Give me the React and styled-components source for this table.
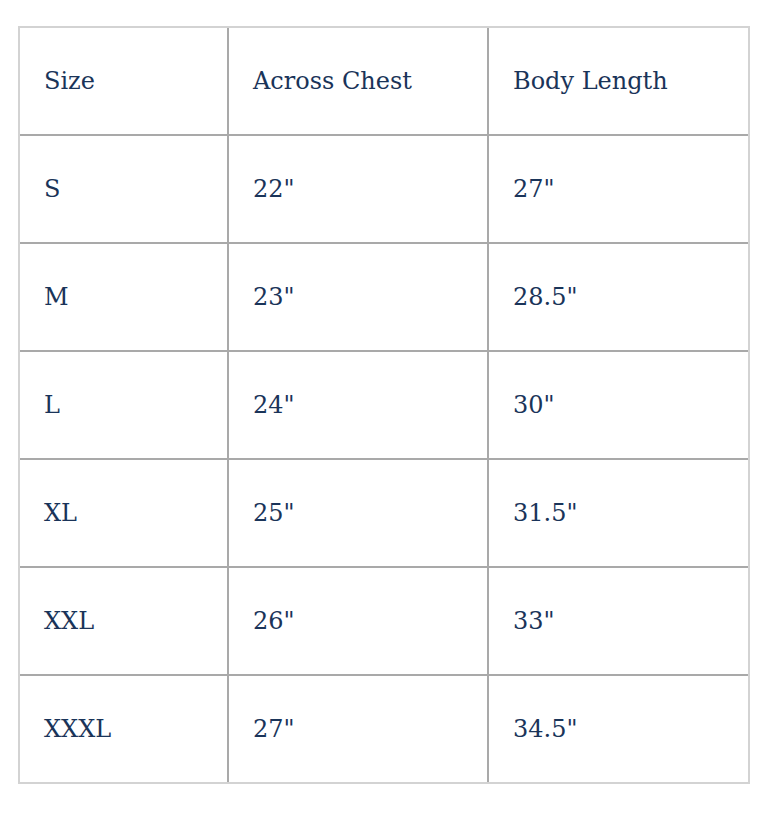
import styled, { createGlobalStyle } from "styled-components";

const GlobalStyle = createGlobalStyle`
  body {
    margin: 0;
    background: #ffffff;
  }
`;

const Page = styled.div`
  padding: 26px 18px;
`;

const Table = styled.table`
  width: 732px;
  border-collapse: separate;
  border-spacing: 0;
  border: 2px solid #d3d3d3;
  table-layout: fixed;
  font-family: "DejaVu Serif", "Liberation Serif", serif;
  font-size: 24px;
  color: #1a3459;
`;

const Col = styled.col`
  width: ${(p) => p.$width}px;
`;

const Cell = styled.td`
  height: 106px;
  padding: 0 0 0 24px;
  box-sizing: content-box;
  vertical-align: middle;
  text-align: left;
  white-space: nowrap;
  border-right: ${(p) => (p.$last ? "none" : "2px solid #a9a9a9")};
  border-bottom: ${(p) => (p.$bottom ? "none" : "2px solid #a9a9a9")};
`;

const widths = [209, 260, 259];

const rows = [
  ["Size", "Across Chest", "Body Length"],
  ["S", '22"', '27"'],
  ["M", '23"', '28.5"'],
  ["L", '24"', '30"'],
  ["XL", '25"', '31.5"'],
  ["XXL", '26"', '33"'],
  ["XXXL", '27"', '34.5"'],
];

export default function App() {
  return (
    <>
      <GlobalStyle />
      <Page>
        <Table>
          <colgroup>
            {widths.map((w, i) => (
              <Col key={i} $width={w} />
            ))}
          </colgroup>
          <tbody>
            {rows.map((row, i) => (
              <tr key={i}>
                {row.map((value, j) => (
                  <Cell
                    key={j}
                    $last={j === row.length - 1}
                    $bottom={i === rows.length - 1}
                  >
                    {value}
                  </Cell>
                ))}
              </tr>
            ))}
          </tbody>
        </Table>
      </Page>
    </>
  );
}
